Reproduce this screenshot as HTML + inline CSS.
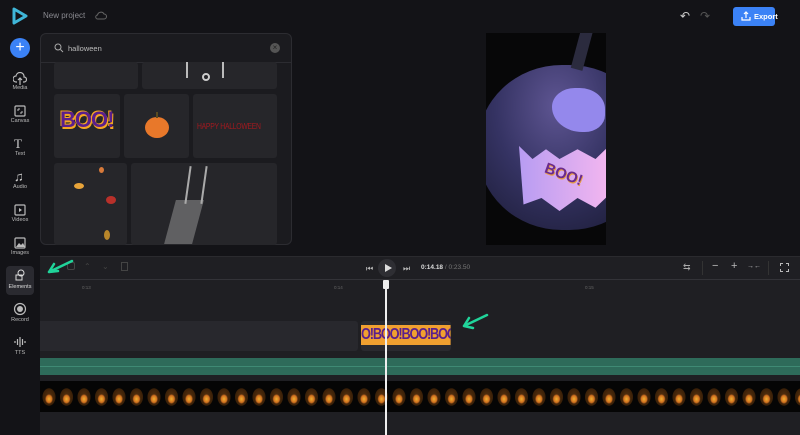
<!DOCTYPE html>
<html><head><meta charset="utf-8"><style>
*{margin:0;padding:0;box-sizing:border-box}
body{width:800px;height:435px;background:#131317;font-family:"Liberation Sans",sans-serif;position:relative;overflow:hidden;color:#ccc}
.a{position:absolute}
.side{left:0;top:0;width:40px;height:435px;background:#131317}
.lbl{position:absolute;width:40px;left:0;text-align:center;font-size:5.5px;color:#bbb}
.ic{position:absolute;left:13px;width:14px;height:14px}
.tile{position:absolute;background:#26262a;border-radius:3px}
.tl{left:40px;top:256px;width:760px;height:179px;background:#1f1f23}
</style></head><body>
<div class="a side"></div>
<svg class="a" style="left:12px;top:7px" width="16" height="18" viewBox="0 0 16 18"><path d="M2 2 L14 9 L2 16 Z" fill="none" stroke="#3fb6d8" stroke-width="3" stroke-linejoin="round"/></svg>
<div class="a" style="left:43px;top:11px;font-size:8px;color:#8a8a90">New project</div>
<svg class="a" style="left:95px;top:11px" width="12" height="9" viewBox="0 0 12 9"><path d="M3 8h6a2.5 2.5 0 0 0 0-5 3.5 3.5 0 0 0-6.5 1A2 2 0 0 0 3 8z" fill="none" stroke="#666" stroke-width="1"/></svg>
<div class="a" style="left:10px;top:38px;width:20px;height:20px;border-radius:50%;background:#3b82f6;color:#fff;font-size:16px;line-height:19px;text-align:center">+</div>
<svg class="ic" style="top:72px" viewBox="0 0 14 14"><path d="M4 10H3a3 3 0 0 1 0-6 4 4 0 0 1 8 1 2.5 2.5 0 0 1 0 5h-1M7 6v7M5 8l2-2 2 2" fill="none" stroke="#bbb" stroke-width="1.2"/></svg>
<div class="lbl" style="top:85px">Media</div>
<svg class="ic" style="top:104px" viewBox="0 0 14 14"><rect x="2" y="2" width="10" height="10" rx="1" fill="none" stroke="#bbb" stroke-width="1.2"/><path d="M5 5h2M5 5v2M9 9H7M9 9V7" stroke="#bbb"/></svg>
<div class="lbl" style="top:118px">Canvas</div>
<div class="a" style="left:14px;top:136px;font-size:13px;color:#ccc;font-family:'Liberation Serif'">T</div>
<div class="lbl" style="top:151px">Text</div>
<div class="a" style="left:14px;top:169px;font-size:13px;color:#ccc">♫</div>
<div class="lbl" style="top:184px">Audio</div>
<svg class="ic" style="top:203px" viewBox="0 0 14 14"><rect x="2" y="2" width="10" height="10" rx="1" fill="none" stroke="#bbb" stroke-width="1.2"/><path d="M6 5v4l3-2z" fill="#bbb"/></svg>
<div class="lbl" style="top:217px">Videos</div>
<svg class="ic" style="top:236px" viewBox="0 0 14 14"><rect x="2" y="2" width="10" height="10" rx="1" fill="none" stroke="#bbb" stroke-width="1.2"/><path d="M3 11l3-4 2 2 2-2 2 4z" fill="#bbb"/></svg>
<div class="lbl" style="top:250px">Images</div>
<div class="a" style="left:6px;top:266px;width:28px;height:29px;border-radius:4px;background:#2a2a30"></div>
<svg class="ic" style="top:268px" viewBox="0 0 14 14"><circle cx="8" cy="5" r="3" fill="none" stroke="#ddd"/><rect x="3" y="7" width="6" height="5" fill="none" stroke="#ddd"/></svg>
<div class="lbl" style="top:284px;color:#ddd">Elements</div>
<svg class="ic" style="top:302px" viewBox="0 0 14 14"><circle cx="7" cy="7" r="5.5" fill="none" stroke="#bbb" stroke-width="1.2"/><circle cx="7" cy="7" r="3" fill="#bbb"/></svg>
<div class="lbl" style="top:317px">Record</div>
<svg class="ic" style="top:335px" viewBox="0 0 14 14"><path d="M2 6v2M4.5 4v6M7 2v10M9.5 4v6M12 6v2" stroke="#bbb" stroke-width="1.2"/></svg>
<div class="lbl" style="top:350px">TTS</div>

<div class="a" style="left:40px;top:33px;width:252px;height:212px;background:#1b1b1f;border:1px solid #2c2c31;border-radius:6px;overflow:hidden">
 <div class="a" style="left:0;top:28px;width:252px;height:1px;background:#2c2c31"></div>
 <svg class="a" style="left:13px;top:9px" width="10" height="10" viewBox="0 0 10 10"><circle cx="4" cy="4" r="3" fill="none" stroke="#aaa"/><path d="M6.5 6.5L9 9" stroke="#aaa"/></svg>
 <div class="a" style="left:27px;top:10px;font-size:7.5px;color:#bbb">halloween</div>
 <div class="a" style="left:229px;top:9px;width:10px;height:10px;border-radius:50%;background:#555;color:#222;font-size:8px;line-height:10px;text-align:center">×</div>
</div>
<div class="tile" style="left:54px;top:62px;width:84px;height:27px"></div>
<div class="tile" style="left:142px;top:62px;width:135px;height:27px"></div>
<div class="a" style="left:186px;top:62px;width:2px;height:16px;background:#bbb"></div>
<div class="a" style="left:222px;top:62px;width:2px;height:16px;background:#bbb"></div>
<div class="a" style="left:202px;top:73px;width:8px;height:8px;border:2px solid #ccc;border-radius:50%"></div>
<div class="tile" style="left:54px;top:94px;width:66px;height:64px"></div>
<div class="a" style="left:60px;top:107px;font-size:22px;font-weight:bold;color:#5a1f8c;text-shadow:1px 2px 0 #f5a623,-1px -1px 0 #f5a623;letter-spacing:-1px">BOO!</div>
<div class="tile" style="left:124px;top:94px;width:65px;height:64px"></div>
<div class="a" style="left:145px;top:117px;width:24px;height:21px;border-radius:50%;background:#e8782a"></div>
<div class="a" style="left:156px;top:112px;width:2px;height:6px;background:#5a4a20"></div>
<div class="tile" style="left:193px;top:94px;width:84px;height:64px"></div>
<div class="a" style="left:197px;top:122px;font-size:8px;color:#a3191f;letter-spacing:-0.3px;font-family:'Liberation Sans Narrow','Liberation Sans';transform:scaleX(0.85);transform-origin:left">HAPPY HALLOWEEN</div>
<div class="tile" style="left:54px;top:163px;width:73px;height:82px"></div>
<div class="a" style="left:106px;top:196px;width:10px;height:8px;background:#b8302a;border-radius:50%"></div>
<div class="a" style="left:74px;top:183px;width:10px;height:6px;background:#e8a43a;border-radius:50%"></div>
<div class="a" style="left:99px;top:167px;width:5px;height:6px;background:#d87a3a;border-radius:50%"></div>
<div class="a" style="left:104px;top:230px;width:6px;height:10px;background:#b8862a;border-radius:50%"></div>
<div class="tile" style="left:131px;top:163px;width:146px;height:82px"></div>
<div class="a" style="left:170px;top:200px;width:28px;height:44px;background:#999;opacity:.5;transform:skewX(-15deg)"></div>
<div class="a" style="left:187px;top:166px;width:2px;height:38px;background:#aaa;transform:rotate(8deg)"></div>
<div class="a" style="left:203px;top:166px;width:2px;height:38px;background:#aaa;transform:rotate(8deg)"></div>

<div class="a" style="left:680px;top:9px;font-size:12px;color:#ccc">↶</div>
<div class="a" style="left:700px;top:9px;font-size:12px;color:#555">↷</div>
<div class="a" style="left:733px;top:7px;width:42px;height:19px;background:#3b82f6;border-radius:3px;color:#fff;font-size:7.5px;font-weight:bold;line-height:19px;padding-left:21px">Export</div>
<svg class="a" style="left:741px;top:11px" width="10" height="10" viewBox="0 0 10 10"><path d="M5 7V1M3 3l2-2 2 2M1 6v3h8V6" fill="none" stroke="#fff" stroke-width="1.2"/></svg>

<div class="a" style="left:486px;top:33px;width:120px;height:212px;background:#070708;overflow:hidden">
 <div class="a" style="left:-8px;top:32px;width:175px;height:165px;border-radius:48%;background:radial-gradient(ellipse at 45% 25%,#5e5592,#353363 45%,#1e1e3a 85%)"></div>
 <div class="a" style="left:90px;top:-5px;width:12px;height:42px;background:#2b2b3e;transform:rotate(15deg)"></div>
 <div class="a" style="left:66px;top:55px;width:53px;height:44px;background:#9488ec;border-radius:45% 50% 40% 60%"></div>
 <div class="a" style="left:33px;top:113px;width:90px;height:65px;background:linear-gradient(90deg,#b79cf2,#f3b6ef);clip-path:polygon(0 0,15% 20%,30% 5%,45% 20%,65% 5%,85% 20%,100% 0,100% 75%,85% 95%,65% 80%,45% 100%,25% 80%,5% 90%)"></div>
 <div class="a" style="left:58px;top:133px;font-size:15px;font-weight:bold;color:#6b2b8c;transform:rotate(20deg);text-shadow:1px 1px 0 #e9a040">BOO!</div>
</div>

<div class="a tl"></div>
<div class="a" style="left:40px;top:256px;width:760px;height:1px;background:#2a2a2e"></div>
<div class="a" style="left:40px;top:279px;width:760px;height:1px;background:#333338"></div>
<div class="a" style="left:67px;top:262px;width:8px;height:8px;border:1px solid #444;border-radius:2px"></div>
<div class="a" style="left:84px;top:262px;font-size:8px;color:#444">⌃</div>
<div class="a" style="left:102px;top:262px;font-size:8px;color:#444">⌄</div>
<div class="a" style="left:121px;top:262px;width:7px;height:9px;border:1px solid #444"></div>
<div class="a" style="left:366px;top:264px;font-size:8px;color:#bbb">⏮</div>
<div class="a" style="left:378px;top:259px;width:18px;height:18px;border-radius:50%;background:#2e2e33"></div>
<svg class="a" style="left:384px;top:264px" width="8" height="8" viewBox="0 0 8 8"><path d="M1 0L8 4L1 8z" fill="#ddd"/></svg>
<div class="a" style="left:403px;top:264px;font-size:8px;color:#bbb">⏭</div>
<div class="a" style="left:421px;top:264px;font-size:6.5px;color:#ddd;font-weight:bold">0:14.18 <span style="color:#777;font-weight:normal">/ 0:23.50</span></div>
<div class="a" style="left:683px;top:262px;font-size:9px;color:#aaa">⇆</div>
<div class="a" style="left:702px;top:261px;width:1px;height:14px;background:#333"></div>
<div class="a" style="left:712px;top:260px;font-size:11px;color:#bbb">−</div>
<div class="a" style="left:731px;top:260px;font-size:11px;color:#bbb">+</div>
<div class="a" style="left:747px;top:263px;font-size:7px;color:#bbb">→←</div>
<div class="a" style="left:768px;top:261px;width:1px;height:14px;background:#333"></div>
<div class="a" style="left:780px;top:263px;width:9px;height:9px;border:1px dashed #bbb"></div>
<div class="a" style="left:82px;top:285px;font-size:4.5px;color:#666">0:13</div>
<div class="a" style="left:334px;top:285px;font-size:4.5px;color:#666">0:14</div>
<div class="a" style="left:585px;top:285px;font-size:4.5px;color:#666">0:15</div>
<div class="a" style="left:40px;top:321px;width:318px;height:30px;background:#28282d;border-radius:0 3px 3px 0"></div>
<div class="a" style="left:361px;top:321px;width:90px;height:30px;background:#2a2a2f;border-radius:3px"></div>
<div class="a" style="left:361px;top:325px;width:90px;height:20px;background:#f0a030;overflow:hidden;white-space:nowrap;font-size:16px;font-weight:bold;color:#5a1f8c;letter-spacing:-1.5px;line-height:19px;transform:scaleX(0.8);transform-origin:left;width:112px">O!BOO!BOO!BOO!</div>
<div class="a" style="left:40px;top:358px;width:760px;height:17px;background:#2e6b5a"></div>
<div class="a" style="left:40px;top:366px;width:760px;height:1px;background:#3f8a74"></div>
<div class="a" style="left:40px;top:381px;width:760px;height:31px;background:#050505"></div>
<div class="a" style="left:40px;top:385px;width:760px;height:24px;background:radial-gradient(ellipse 4px 5px at 9px 14px,#f0b030 0,#d07020 70%,transparent 100%),radial-gradient(ellipse 9px 12px at 9px 12px,#5a3410 0,#3a2008 70%,transparent 75%);background-size:17.5px 24px"></div>
<div class="a" style="left:385px;top:281px;width:2px;height:154px;background:#eee"></div>
<div class="a" style="left:383px;top:280px;width:6px;height:9px;background:#eee;border-radius:1px"></div>
<svg class="a" style="left:45px;top:258px" width="30" height="20" viewBox="0 0 30 20"><path d="M27 3L4 14M4 14l9-1M4 14l5-8" fill="none" stroke="#20d49a" stroke-width="2.5" stroke-linecap="round"/></svg>
<svg class="a" style="left:460px;top:312px" width="30" height="20" viewBox="0 0 30 20"><path d="M27 3L4 14M4 14l9 2M4 14l5-8" fill="none" stroke="#20d49a" stroke-width="2.5" stroke-linecap="round"/></svg>
</body></html>
